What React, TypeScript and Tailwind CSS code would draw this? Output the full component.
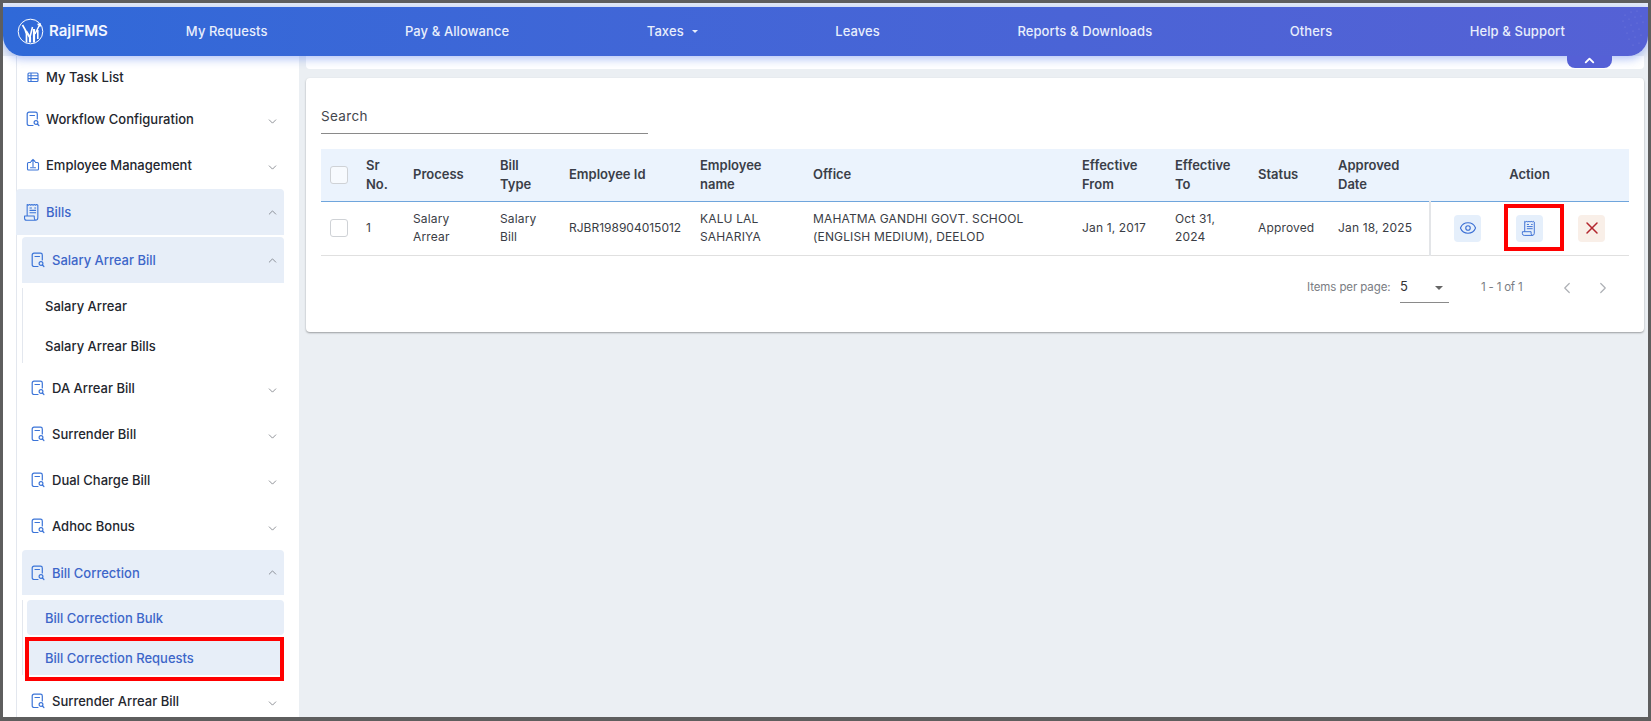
import React from "react";
import { ChevronDown, ChevronUp, ChevronLeft, ChevronRight, Eye, X } from "lucide-react";

const DocSearch = () => (
  <svg width="14" height="16" viewBox="0 0 14 16" fill="none" stroke="#3b74d8" strokeWidth="1.2" strokeLinecap="round" className="shrink-0">
    <path d="M7 14.5H3A1.8 1.8 0 0 1 1.2 12.7V3A1.8 1.8 0 0 1 3 1.2h6.5A1.8 1.8 0 0 1 11.3 3v5" />
    <path d="M4 4.5h4.5" />
    <circle cx="10" cy="11.5" r="1.9" />
    <path d="M11.4 13l1.5 1.5" />
  </svg>
);

const Scroll = ({ size = 16, color = "#3b74d8" }: { size?: number; color?: string }) => (
  <svg width={size} height={size} viewBox="0 0 16 16" fill="none" stroke={color} strokeWidth="0.9" strokeLinejoin="round" className="shrink-0">
    <path d="M3.5 11V1.2l1 .7 1-.7 1 .7 1-.7 1 .7 1-.7 1 .7 1-.7 1 .7V12.5a2 2 0 0 1-2 2H3a1.7 1.7 0 0 1-1.7-1.7V11h8.200v1.600a1.900 1.900 0 0 0 1.500 1.900" />
    <path d="M5.500 4.200h2M5.500 6.200h5.500M5.500 8.200h5.500M9.500 4.200h1.500" />
  </svg>
);

const TableIcon = () => (
  <svg width="14" height="14" viewBox="0 0 14 14" fill="none" stroke="#3b74d8" strokeWidth="1.1" className="shrink-0">
    <rect x="2" y="3" width="10" height="8.5" rx="1" />
    <path d="M2 5.8h10M2 8.6h10M5 3v8.5" />
  </svg>
);

const BoxUp = () => (
  <svg width="14" height="14" viewBox="0 0 14 14" fill="none" stroke="#3b74d8" strokeWidth="1.1" strokeLinecap="round" className="shrink-0">
    <path d="M4.5 4.5H2.5a1 1 0 0 0-1 1V11a1 1 0 0 0 1 1h9a1 1 0 0 0 1-1V5.500a1 1 0 0 0-1-1H9.500" />
    <path d="M7 8.500V1.500M5 3.500l2-2 2 2M4.500 9.800h5" />
  </svg>
);

const Logo = () => (
  <svg width="27" height="27" viewBox="0 0 27 27" fill="none" stroke="#fff" className="shrink-0">
    <circle cx="13.500" cy="13.500" r="12.300" strokeWidth="1" />
    <path d="M5.500 7c2 3 3.500 5.500 4 9v8.500" strokeWidth="1.700" />
    <path d="M9 13l4 6.500v5" strokeWidth="2.200" />
    <path d="M13 19l2.500-10" strokeWidth="1.600" />
    <path d="M17 24.500V11" strokeWidth="2.200" />
    <path d="M18 16l5-10M20.500 6.500L23 6l.5 2.500" strokeWidth="1.500" />
    <path d="M20.800 12v9" strokeWidth="1.600" />
  </svg>
);

const Row = ({
  icon,
  label,
  open,
  active,
  gap = "gap-[6px]",
  height = "h-[46px]",
  className = "",
}: {
  icon: React.ReactNode;
  label: string;
  open?: boolean;
  active?: boolean;
  gap?: string;
  height?: string;
  className?: string;
}) => (
  <div
    className={`flex ${height} items-center ${gap} pl-[9px] pr-[5px] rounded-t-[4px] ${
      active ? "bg-[#e7eef8] text-[#3d66c9]" : "text-[#23262e]"
    } ${className}`}
  >
    <span className="flex w-[14px] shrink-0 justify-center">{icon}</span>
    <span className="flex-1 translate-y-px text-[13px] font-medium">{label}</span>
    {open === undefined ? null : open ? (
      <ChevronUp size={13} strokeWidth={1.4} color="#6e7279" />
    ) : (
      <ChevronDown size={13} strokeWidth={1.4} color="#6e7279" className="translate-y-[2px]" />
    )}
  </div>
);

const SubItem = ({ label, active, marked }: { label: string; active?: boolean; marked?: boolean }) => (
  <div
    className={`relative mt-[5px] ml-[4px] flex h-[35px] items-center rounded-[4px] pl-[18px] text-[13px] font-medium ${
      active ? "bg-[#e7eef8] text-[#3d66c9]" : "text-[#23262e]"
    }`}
  >
    <span className="translate-y-px">{label}</span>
    {marked && <span className="absolute left-[-2px] right-0 top-[-3px] h-[44px] border-[4px] border-[#ff0000]" />}
  </div>
);

const Sidebar = () => (
  <aside className="h-full w-[296px] shrink-0 overflow-hidden bg-white pl-[13px]">
    <div className="h-[700px] w-[268px] border-l border-[#e3e7ee]">
      <Row icon={<TableIcon />} label="My Task List" height="h-[42px]" />
      <Row icon={<DocSearch />} label="Workflow Configuration" open={false} height="h-[42px]" />
      <Row icon={<BoxUp />} label="Employee Management" open={false} className="mt-[2px]" />
      <Row icon={<Scroll size={19} />} label="Bills" open active height="h-[46px]" gap="gap-[7px]" className="mt-px -ml-px" />
      <div className="ml-[5px] mt-[2px]">
        <Row icon={<DocSearch />} label="Salary Arrear Bill" open active gap="gap-[7px]" />
        <div className="border-l border-[#e3e7ee]">
          <SubItem label="Salary Arrear" />
          <SubItem label="Salary Arrear Bills" />
        </div>
        <Row icon={<DocSearch />} label="DA Arrear Bill" open={false} gap="gap-[7px]" className="mt-[2px]" />
        <Row icon={<DocSearch />} label="Surrender Bill" open={false} gap="gap-[7px]" />
        <Row icon={<DocSearch />} label="Dual Charge Bill" open={false} gap="gap-[7px]" />
        <Row icon={<DocSearch />} label="Adhoc Bonus" open={false} gap="gap-[7px]" />
        <Row icon={<DocSearch />} label="Bill Correction" open active gap="gap-[7px]" height="h-[45px]" className="mt-px" />
        <div className="border-l border-[#e3e7ee]">
          <SubItem label="Bill Correction Bulk" active />
          <SubItem label="Bill Correction Requests" active marked />
        </div>
        <Row icon={<DocSearch />} label="Surrender Arrear Bill" open={false} gap="gap-[7px]" className="mt-[3px]" />
      </div>
    </div>
  </aside>
);

const headers = [
  "Sr\nNo.",
  "Process",
  "Bill\nType",
  "Employee Id",
  "Employee\nname",
  "Office",
  "Effective\nFrom",
  "Effective\nTo",
  "Status",
  "Approved\nDate",
];

const cells = [
  "1",
  "Salary\nArrear",
  "Salary\nBill",
  "RJBR198904015012",
  "KALU LAL\nSAHARIYA",
  "MAHATMA GANDHI GOVT. SCHOOL\n(ENGLISH MEDIUM), DEELOD",
  "Jan 1, 2017",
  "Oct 31,\n2024",
  "Approved",
  "Jan 18, 2025",
];

const Check = () => <span className="ml-[9px] block h-[18px] w-[18px] rounded-[3px] border border-[#cfd2d6] bg-white/60" />;

const DataTable = () => (
  <table className="w-[1308px] table-fixed border-collapse">
    <colgroup>
      <col className="w-[45px]" />
      <col className="w-[47px]" />
      <col className="w-[87px]" />
      <col className="w-[69px]" />
      <col className="w-[131px]" />
      <col className="w-[113px]" />
      <col className="w-[269px]" />
      <col className="w-[93px]" />
      <col className="w-[83px]" />
      <col className="w-[80px]" />
      <col className="w-[92px]" />
      <col className="w-[199px]" />
    </colgroup>
    <thead>
      <tr className="h-[52px] border-b border-[#6fa5dc] bg-[#ebf3fd]">
        <th>
          <Check />
        </th>
        {headers.map((h) => (
          <th key={h} className="text-left text-[13px] leading-[19px] font-semibold whitespace-pre-line text-[#3a3e48]">
            {h}
          </th>
        ))}
        <th className="text-center text-[13px] font-semibold text-[#3a3e48]">Action</th>
      </tr>
    </thead>
    <tbody>
      <tr className="h-[54px] border-b border-[#e0e0e0]">
        <td>
          <Check />
        </td>
        {cells.map((c, i) => (
          <td
            key={c}
            className={`text-[12px] leading-[18px] whitespace-pre-line text-[#3a3d45] ${i === 3 ? "" : "tracking-[0.15px]"}`}
          >
            {c}
          </td>
        ))}
        <td className="border-l-2 border-[#e3e5e8]">
          <div className="flex items-center gap-[35px] pl-[23px]">
            <span className="flex h-[27px] w-[27px] items-center justify-center rounded-[4px] bg-[#e5effb]">
              <Eye size={18} strokeWidth={1.5} color="#3b6fd4" />
            </span>
            <span className="relative flex h-[27px] w-[27px] items-center justify-center rounded-[4px] bg-[#e5effb]">
              <Scroll size={17} color="#3b6fd4" />
              <span className="absolute left-[-12px] top-[-11px] h-[47px] w-[60px] border-[4px] border-[#ff0000]" />
            </span>
            <span className="flex h-[27px] w-[27px] items-center justify-center rounded-[4px] bg-[#f9efe8]">
              <X size={20} strokeWidth={1.8} color="#b3262e" />
            </span>
          </div>
        </td>
      </tr>
    </tbody>
  </table>
);

const Pagination = () => (
  <div className="mt-[17px] flex h-[30px] items-center text-[11.5px] text-[#7a7d83]">
    <span className="ml-[986px] w-[93px] tracking-[-0.1px]">Items per page:</span>
    <span className="relative flex h-[30px] w-[49px] items-center border-b border-[#8a8a8a] text-[13px] text-[#333]">
      5
      <span className="absolute right-[6px] top-[13px] h-0 w-0 border-x-[4px] border-t-[4px] border-x-transparent border-t-[#666]" />
    </span>
    <span className="ml-[32px] w-[60px] tracking-[-0.2px]">1 - 1 of 1</span>
    <ChevronLeft size={18} strokeWidth={1.6} color="#adb0b5" className="ml-[17px]" />
    <ChevronRight size={18} strokeWidth={1.6} color="#adb0b5" className="ml-[18px]" />
  </div>
);

const dots = [
  [1622, 8], [1628, 5], [1634, 4], [1620, 14], [1626, 12], [1632, 10], [1638, 9], [1622, 20], [1628, 18], [1634, 16],
  [1640, 15], [1624, 26], [1630, 24], [1636, 22], [1626, 32], [1632, 30], [1638, 28], [1630, 38], [1636, 36],
];

export default function App() {
  const navItems = ["My Requests", "Pay & Allowance", "Taxes", "Leaves", "Reports & Downloads", "Others", "Help & Support"];
  return (
    <div className="box-border flex h-[721px] w-[1651px] flex-col overflow-hidden border-[3px] border-b-4 border-[#5e5e5e] bg-[#ebeff3] font-['Inter',sans-serif]">
      <div className="h-[4px] shrink-0 bg-[#e6ecf8]" />
      <header className="relative z-10 flex h-[49px] shrink-0 items-center rounded-b-[20px] bg-gradient-to-r from-[#2f69d8] to-[#5561d5] pl-[14px] pr-[83px] shadow-[0_3px_10px_rgba(80,120,235,0.45)]">
        <Logo />
        <span className="ml-[5px] text-[15px] font-semibold text-[#f1f5ff]">RajIFMS</span>
        <nav className="ml-[78px] flex flex-1 items-center justify-between text-[13px] font-medium tracking-[0.1px] text-[#e8eefc]">
          {navItems.map((n) => (
            <span key={n} className="flex items-center">
              {n}
              {n === "Taxes" && (
                <span className="ml-[8px] h-0 w-0 border-x-[3px] border-t-[3px] border-x-transparent border-t-[#e8eefc]" />
              )}
            </span>
          ))}
        </nav>
        <svg width="1645" height="49" className="pointer-events-none absolute left-0 top-0" fill="#ffffff" fillOpacity="0.18">
          {dots.map(([x, y]) => (
            <circle key={`${x}-${y}`} cx={x} cy={y} r="0.6" />
          ))}
        </svg>
        <span className="absolute left-[1564px] top-[49px] flex h-[12px] w-[45px] items-start justify-center rounded-b-[8px] bg-[#5560d6]">
          <ChevronUp size={15} strokeWidth={3} color="#fff" className="-translate-y-[3px]" />
        </span>
      </header>
      <div className="flex min-h-0 flex-1">
        <Sidebar />
        <main className="flex-1 pl-[7px] pr-[4px]">
          <div className="h-[13px] rounded-b-[4px] bg-white" />
          <section className="mt-[9px] h-[254px] rounded-[4px] bg-white px-[15px] shadow-[0_1px_2px_rgba(0,0,0,0.35)]">
            <div className="flex h-[56px] w-[327px] items-end border-b border-[#8a8a8a] pb-[7px] text-[13.5px] tracking-[0.35px] text-[#43464d]">
              Search
            </div>
            <div className="mt-[15px]">
              <DataTable />
            </div>
            <Pagination />
          </section>
        </main>
      </div>
    </div>
  );
}
